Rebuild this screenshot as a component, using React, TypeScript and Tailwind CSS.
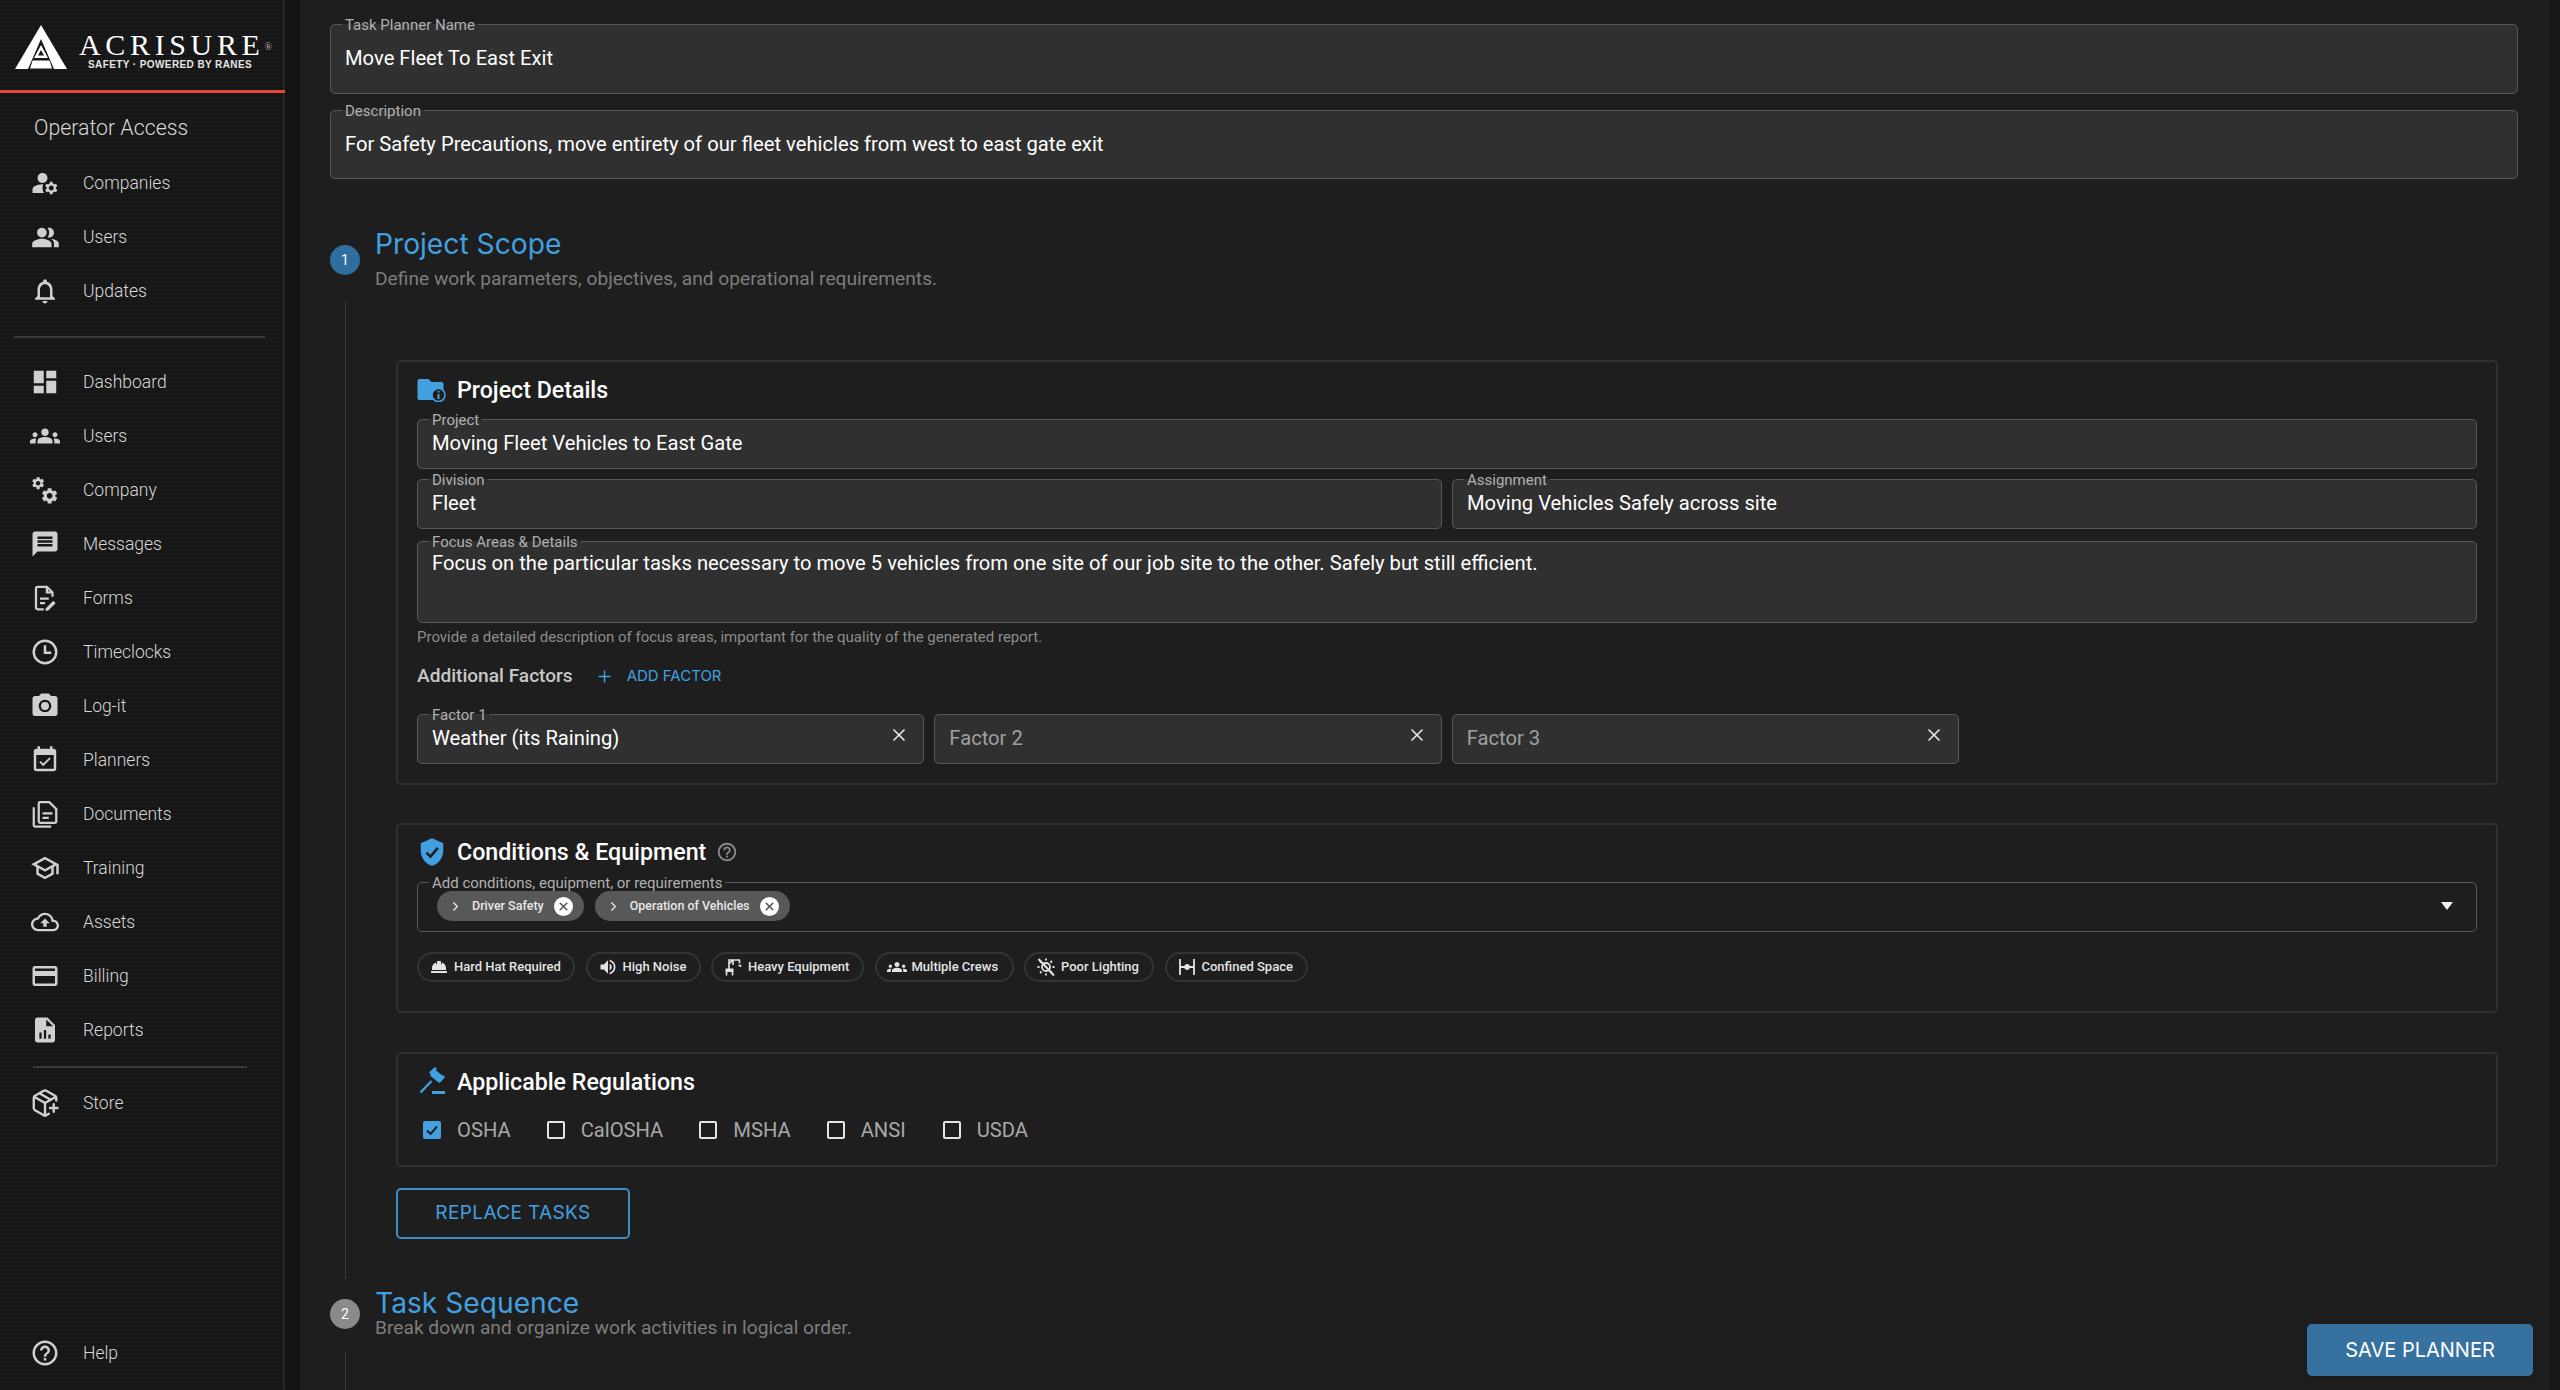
import { ChevronRight, PackagePlus, Plus, X } from "lucide-react";
import { FaHardHat } from "react-icons/fa";
import type { ReactNode } from "react";

const gear =
  "M19.14 12.94c.04-.3.06-.61.06-.94 0-.32-.02-.64-.07-.94l2.03-1.58c.18-.14.23-.41.12-.61l-1.92-3.32c-.12-.22-.37-.29-.59-.22l-2.39.96c-.5-.38-1.03-.7-1.62-.94l-.36-2.54c-.04-.24-.24-.41-.48-.41h-3.84c-.24 0-.43.17-.47.41l-.36 2.54c-.59.24-1.13.57-1.62.94l-2.39-.96c-.22-.08-.47 0-.59.22L2.74 8.87c-.12.21-.08.47.12.61l2.03 1.58c-.05.3-.09.63-.09.94s.02.64.07.94l-2.03 1.58c-.18.14-.23.41-.12.61l1.92 3.32c.12.22.37.29.59.22l2.39-.96c.5.38 1.03.7 1.62.94l.36 2.54c.05.24.24.41.48.41h3.84c.24 0 .44-.17.47-.41l.36-2.54c.59-.24 1.13-.56 1.62-.94l2.39.96c.22.08.47 0 .59-.22l1.92-3.32c.12-.22.07-.47-.12-.61l-2.01-1.58zM12 15.6c-1.98 0-3.6-1.62-3.6-3.6s1.62-3.6 3.6-3.6 3.6 1.62 3.6 3.6-1.62 3.6-3.6 3.6z";
const groups =
  "M12 12.75c1.63 0 3.07.39 4.24.9 1.08.48 1.76 1.56 1.76 2.73V18H6v-1.61c0-1.18.68-2.26 1.76-2.73 1.17-.52 2.61-.91 4.24-.91zM4 13c1.1 0 2-.9 2-2s-.9-2-2-2-2 .9-2 2 .9 2 2 2zm1.13 1.1c-.37-.06-.74-.1-1.13-.1-.99 0-1.93.21-2.78.58C.48 14.9 0 15.62 0 16.43V18h4.5v-1.61c0-.83.23-1.61.63-2.29zM20 13c1.1 0 2-.9 2-2s-.9-2-2-2-2 .9-2 2 .9 2 2 2zm4 3.43c0-.81-.48-1.53-1.22-1.85-.85-.37-1.79-.58-2.78-.58-.39 0-.76.04-1.13.1.4.68.63 1.46.63 2.29V18H24v-1.57zM12 6c1.66 0 3 1.34 3 3s-1.34 3-3 3-3-1.34-3-3 1.34-3 3-3z";
const helpOutline =
  "M11 18h2v-2h-2v2zm1-16C6.48 2 2 6.48 2 12s4.48 10 10 10 10-4.48 10-10S17.52 2 12 2zm0 18c-4.41 0-8-3.59-8-8s3.59-8 8-8 8 3.59 8 8-3.59 8-8 8zm0-14c-2.21 0-4 1.79-4 4h2c0-1.1.9-2 2-2s2 .9 2 2c0 2-3 1.75-3 5h2c0-2.25 3-2.5 3-5 0-2.21-1.79-4-4-4z";

function Mui({ children, className = "size-[30px]" }: { children: ReactNode; className?: string }) {
  return (
    <svg viewBox="0 0 24 24" fill="currentColor" className={className}>
      {children}
    </svg>
  );
}

const navIcons: Record<string, ReactNode> = {
  companies: (
    <Mui className="size-[32px]">
      <circle cx="10" cy="8" r="4" />
      <path d="M10.67 13.02c-.22-.01-.44-.02-.67-.02-2.42 0-4.68.67-6.61 1.82-.88.52-1.39 1.5-1.39 2.53V20h9.26c-.79-1.13-1.26-2.51-1.26-4 0-1.07.25-2.07.67-2.98z" />
      <path d="M20.75 16c0-.22-.03-.42-.06-.63l1.14-1.01-1-1.73-1.45.49c-.32-.27-.68-.48-1.08-.63L18 11h-2l-.3 1.49c-.4.15-.76.36-1.08.63l-1.45-.49-1 1.73 1.14 1.01c-.03.21-.06.41-.06.63s.03.42.06.63l-1.14 1.01 1 1.73 1.45-.49c.32.27.68.48 1.08.63L16 21h2l.3-1.49c.4-.15.76-.36 1.08-.63l1.45.49 1-1.73-1.14-1.01c.03-.21.06-.41.06-.63zM17 18c-1.1 0-2-.9-2-2s.9-2 2-2 2 .9 2 2-.9 2-2 2z" />
    </Mui>
  ),
  people: (
    <Mui className="size-[29px]">
      <circle cx="9" cy="8" r="4" />
      <path d="M16.67 13.13C18.04 14.06 19 15.32 19 17v3h4v-3c0-2.18-3.57-3.47-6.33-3.87zM15 12c2.21 0 4-1.79 4-4s-1.79-4-4-4c-.47 0-.91.1-1.33.24C14.5 5.27 15 6.58 15 8s-.5 2.73-1.33 3.76c.42.14.86.24 1.33.24zm-6 1c-2.67 0-8 1.34-8 4v3h16v-3c0-2.66-5.33-4-8-4z" />
    </Mui>
  ),
  bell: (
    <Mui>
      <path d="M12 22c1.1 0 2-.9 2-2h-4c0 1.1.9 2 2 2zm6-6v-5c0-3.07-1.63-5.64-4.5-6.32V4c0-.83-.67-1.5-1.5-1.5s-1.5.67-1.5 1.5v.68C7.64 5.36 6 7.92 6 11v5l-2 2v1h16v-1l-2-2zm-2 1H8v-6c0-2.48 1.51-4.5 4-4.5s4 2.02 4 4.5v6z" />
    </Mui>
  ),
  dashboard: (
    <Mui>
      <path d="M3 13h8V3H3v10zm0 8h8v-6H3v6zm10 0h8V11h-8v10zm0-18v6h8V3h-8z" />
    </Mui>
  ),
  groups: (
    <Mui className="size-[32px]">
      <path d={groups} />
    </Mui>
  ),
  gears: (
    <Mui>
      <path d={gear} transform="translate(0.5 0.5) scale(0.5)" />
      <path d={gear} transform="translate(8 9) scale(0.64)" />
    </Mui>
  ),
  message: (
    <Mui>
      <path d="M20 2H4c-1.1 0-1.99.9-1.99 2L2 22l4-4h14c1.1 0 2-.9 2-2V4c0-1.1-.9-2-2-2zm-2 12H6v-2h12v2zm0-3H6V9h12v2zm0-3H6V6h12v2z" />
    </Mui>
  ),
  forms: (
    <Mui>
      <g fill="none" stroke="currentColor" strokeWidth="1.8">
        <path d="M11 21H6a1.2 1.2 0 0 1-1.2-1.2V4.2A1.2 1.2 0 0 1 6 3h7.5L18 7.5V11" />
        <path d="M13.5 3v4.5H18" />
        <path d="M8 12.5h7M8 16h4" />
      </g>
      <path d="M12.5 20.3v1.9h1.9l6.1-6.1-1.9-1.9z" />
    </Mui>
  ),
  clock: (
    <Mui>
      <g fill="none" stroke="currentColor" strokeWidth="2">
        <circle cx="12" cy="12" r="9" />
        <path d="M12 6.5V12.5h5" />
      </g>
    </Mui>
  ),
  camera: (
    <Mui>
      <circle cx="12" cy="12" r="3.2" />
      <path d="M9 2 7.17 4H4c-1.1 0-2 .9-2 2v12c0 1.1.9 2 2 2h16c1.1 0 2-.9 2-2V6c0-1.1-.9-2-2-2h-3.17L15 2H9zm3 15c-2.76 0-5-2.24-5-5s2.24-5 5-5 5 2.24 5 5-2.24 5-5 5z" />
    </Mui>
  ),
  event: (
    <Mui>
      <path d="M16.53 11.06 15.47 10l-4.88 4.88-2.12-2.12-1.06 1.06L10.59 17l5.94-5.94zM19 3h-1V1h-2v2H8V1H6v2H5c-1.11 0-1.99.9-1.99 2L3 19c0 1.1.89 2 2 2h14c1.1 0 2-.9 2-2V5c0-1.1-.9-2-2-2zm0 16H5V8h14v11z" />
    </Mui>
  ),
  documents: (
    <Mui>
      <g fill="none" stroke="currentColor" strokeWidth="1.8">
        <path d="M3 6.5V21a1 1 0 0 0 1 1h13" />
        <path d="M8 2.5h7.5L21 8v10a1 1 0 0 1-1 1H8a1 1 0 0 1-1-1V3.5a1 1 0 0 1 1-1z" />
        <path d="M10 11.5h8M10 15h5" />
      </g>
    </Mui>
  ),
  school: (
    <Mui className="size-[32px]">
      <path d="M12 3 1 9l4 2.18v6L12 21l7-3.82v-6l2-1.09V17h2V9L12 3zm6.82 6L12 12.72 5.18 9 12 5.28 18.82 9zM17 15.99l-5 2.73-5-2.73v-3.72L12 15l5-2.73v3.72z" />
    </Mui>
  ),
  cloud: (
    <Mui className="size-[28px]">
      <path d="M19.35 10.04C18.67 6.59 15.64 4 12 4 9.11 4 6.6 5.64 5.35 8.04 2.34 8.36 0 10.91 0 14c0 3.31 2.69 6 6 6h13c2.76 0 5-2.24 5-5 0-2.64-2.05-4.78-4.65-4.96zM19 18H6c-2.21 0-4-1.79-4-4 0-2.05 1.53-3.76 3.56-3.97l1.07-.11.5-.95C8.08 7.14 9.94 6 12 6c2.62 0 4.88 1.86 5.39 4.43l.3 1.5 1.53.11c1.56.1 2.78 1.41 2.78 2.96 0 1.65-1.35 3-3 3zM8 13h2.55v3h2.9v-3H16l-4-4z" />
    </Mui>
  ),
  card: (
    <Mui>
      <path d="M20 4H4c-1.11 0-1.99.89-1.99 2L2 18c0 1.11.89 2 2 2h16c1.11 0 2-.89 2-2V6c0-1.11-.89-2-2-2zm0 14H4v-6h16v6zm0-10H4V6h16v2z" />
    </Mui>
  ),
  reports: (
    <Mui>
      <path
        fillRule="evenodd"
        d="M14 2H6c-1.1 0-2 .9-2 2v16c0 1.1.9 2 2 2h12c1.1 0 2-.9 2-2V8l-6-6zM13 9V3.5L18.5 9H13zM7.5 19h1.8v-5H7.5zM11.1 19h1.8v-7h-1.8zM14.7 19h1.8v-3.5h-1.8z"
      />
    </Mui>
  ),
  store: <PackagePlus className="size-[30px]" strokeWidth={1.9} />,
  help: (
    <Mui>
      <path d={helpOutline} />
    </Mui>
  ),
};

function NavItem({ icon, label }: { icon: string; label: string }) {
  return (
    <div className="flex h-[54px] items-center pl-[30px]">
      <span className="flex w-[30px] justify-center text-[#d0d0d0]">{navIcons[icon]}</span>
      <span className="ml-[23px] text-[17.5px] font-light text-[#d8d8d8]">{label}</span>
    </div>
  );
}

function Logo() {
  return (
    <div className="flex h-[90px] items-start pl-[15px] pt-[25px]">
      <svg viewBox="0 0 52 44" className="h-[44px] w-[52px]" fill="#fff">
        <path d="M26 0 52 44H39L26 14 13 44H0z" />
        <path fillRule="evenodd" d="M26 20 33 33H19zM26 25 23 30.500H29z" />
        <path d="M17.500 35.500H34.500L37 43.500H15z" />
      </svg>
      <div className="ml-[12px] mt-[5px] flex flex-col">
        <div className="font-['Liberation_Serif',serif] text-[30px] leading-[30px] tracking-[0.155em] text-white">
          ACRISURE<sup className="text-[10px] tracking-normal text-[#bbb]">®</sup>
        </div>
        <div className="ml-[9px] mt-[-1px] font-['Liberation_Sans',sans-serif] text-[10px] font-bold leading-[12px] tracking-[0.04em] text-[#e4e4e4]">
          SAFETY · POWERED BY RANES
        </div>
      </div>
    </div>
  );
}

function Sidebar() {
  return (
    <aside className="flex h-full w-[285px] shrink-0 flex-col border-r-2 border-[#262626] bg-[#161616] bg-[radial-gradient(#1c1c1c_1px,transparent_1px)] bg-[length:4px_4px]">
      <Logo />
      <div className="h-[3px] w-[285px] bg-[#e8483c]" />
      <div className="ml-[34px] mt-[23px] text-[21.3px] font-light leading-[24px] text-[#d8d8d8]">Operator Access</div>
      <div className="mt-[16px]">
        <NavItem icon="companies" label="Companies" />
        <NavItem icon="people" label="Users" />
        <NavItem icon="bell" label="Updates" />
      </div>
      <div className="mx-[14px] mb-[17px] mt-[18px] h-[2px] w-[251px] bg-[#3a3a3a]" />
      <NavItem icon="dashboard" label="Dashboard" />
      <NavItem icon="groups" label="Users" />
      <NavItem icon="gears" label="Company" />
      <NavItem icon="message" label="Messages" />
      <NavItem icon="forms" label="Forms" />
      <NavItem icon="clock" label="Timeclocks" />
      <NavItem icon="camera" label="Log-it" />
      <NavItem icon="event" label="Planners" />
      <NavItem icon="documents" label="Documents" />
      <NavItem icon="school" label="Training" />
      <NavItem icon="cloud" label="Assets" />
      <NavItem icon="card" label="Billing" />
      <NavItem icon="reports" label="Reports" />
      <div className="mb-[8px] ml-[33px] mt-[9px] h-[2px] w-[214px] bg-[#3a3a3a]" />
      <NavItem icon="store" label="Store" />
      <div className="mt-auto pb-[10px]">
        <NavItem icon="help" label="Help" />
      </div>
    </aside>
  );
}

function Field({
  label,
  className,
  filled = true,
  children,
}: {
  label?: string;
  className: string;
  filled?: boolean;
  children: ReactNode;
}) {
  return (
    <fieldset
      className={`min-w-0 rounded-[5px] border-[1.5px] border-[#585858] px-[14px] ${filled ? "bg-[#303030]" : ""} ${className}`}
    >
      <legend className={`h-[18px] text-[15px] leading-[21px] text-[#b0b0b0] ${label ? "-ml-[3px] px-[3px]" : "w-0 p-0"}`}>
        {label}
      </legend>
      {children}
    </fieldset>
  );
}

function Value({ className, children }: { className: string; children: ReactNode }) {
  return <div className={`text-[20.2px] leading-[24px] text-white ${className}`}>{children}</div>;
}

function Section({ icon, title, children }: { icon: ReactNode; title: string; children?: ReactNode }) {
  return (
    <div className="flex h-[30px] items-center">
      <span className="flex w-[40px] justify-start text-[#42a0e0]">{icon}</span>
      <span className="text-[23.2px] font-medium text-white">{title}</span>
      {children}
    </div>
  );
}

function Step({ n, active, title, sub, subClass }: { n: number; active: boolean; title: string; sub: string; subClass: string }) {
  return (
    <div className="flex items-center">
      <div
        className={`mt-[2px] flex size-[30px] shrink-0 items-center justify-center rounded-full text-[14px] text-white ${active ? "bg-[#2f6f9f]" : "bg-[#8a8a8a]"}`}
      >
        {n}
      </div>
      <div className="ml-[15px]">
        <div className="font-['Inter',sans-serif] text-[28.2px] leading-[34px] text-[#42a0e0]">{title}</div>
        <div className={`text-[19.2px] leading-[24px] text-[#7d7d7d] ${subClass}`}>{sub}</div>
      </div>
    </div>
  );
}

function Factor({ label, value, placeholder }: { label?: string; value?: string; placeholder?: string }) {
  return (
    <Field label={label} className="relative h-[59px] flex-1">
      <div className={`mt-[3px] text-[20.2px] leading-[24px] ${value ? "text-white" : "text-[#a0a0a0]"}`}>
        {value ?? placeholder}
      </div>
      <X className="absolute right-[14px] top-[2px] size-[20px] text-[#e8e8e8]" strokeWidth={2} />
    </Field>
  );
}

function Chip({ label }: { label: string }) {
  return (
    <div className="flex h-[30px] items-center rounded-full bg-[#585858] pl-[11px] pr-[11px]">
      <ChevronRight className="size-[15px] text-[#f0f0f0]" strokeWidth={1.8} />
      <span className="ml-[9px] text-[12.5px] font-medium text-[#e8e8e8]">{label}</span>
      <span className="ml-[10px] flex size-[19px] items-center justify-center rounded-full bg-white">
        <X className="size-[13px] text-[#585858]" strokeWidth={3} />
      </span>
    </div>
  );
}

function QuickChip({ icon, label, width }: { icon: ReactNode; label: string; width: string }) {
  return (
    <div className={`flex h-[30px] items-center rounded-full border-2 border-[#343434] pl-[10px] ${width}`}>
      <span className="flex w-[20px] justify-center text-[#e4e4e4]">{icon}</span>
      <span className="ml-[5px] text-[13px] font-medium text-[#e4e4e4]">{label}</span>
    </div>
  );
}

function Check({ label, checked, className = "" }: { label: string; checked?: boolean; className?: string }) {
  return (
    <div className={`flex h-[24px] items-center ${className}`}>
      {checked ? (
        <span className="flex size-[18px] items-center justify-center rounded-[2px] bg-[#42a0e0]">
          <svg viewBox="0 0 18 18" className="size-[18px]" fill="none" stroke="#1e1e1e" strokeWidth="2">
            <path d="M4 9.500l3.500 3.500 6.500-7.500" />
          </svg>
        </span>
      ) : (
        <span className="size-[18px] rounded-[2px] border-2 border-[#e4e4e4]" />
      )}
      <span className="ml-[16px] text-[20.2px] text-[#a8a8a8]">{label}</span>
    </div>
  );
}

function Card({ className, children }: { className: string; children: ReactNode }) {
  return <section className={`rounded-[5px] border-2 border-[#303030] px-[19px] ${className}`}>{children}</section>;
}

export default function App() {
  return (
    <div className="relative flex h-[1390px] overflow-hidden bg-[#131313] font-['Roboto',sans-serif]">
      <Sidebar />
      <div className="w-[15px] shrink-0" />
      <main className="w-[2249px] shrink-0 bg-[#1e1e1e] pl-[30px] pr-[31px] pt-[15px]">
        <Field label="Task Planner Name" className="h-[79px]">
          <Value className="mt-[13px]">Move Fleet To East Exit</Value>
        </Field>
        <Field label="Description" className="mt-[7px] h-[78px]">
          <Value className="mt-[13px]">For Safety Precautions, move entirety of our fleet vehicles from west to east gate exit</Value>
        </Field>

        <div className="mt-[48px]">
          <Step
            n={1}
            active
            title="Project Scope"
            sub="Define work parameters, objectives, and operational requirements."
            subClass="mt-[6px]"
          />
        </div>

        <div className="ml-[15px] mr-[20px] mt-[11px] border-l border-[#3a3a3a] pb-[40px] pl-[50px] pt-[58px]">
          <Card className="pb-[19px] pt-[13px]">
            <Section
              title="Project Details"
              icon={
                <svg viewBox="0 0 28 24" className="h-[24px] w-[29px]">
                  <path d="M2 1h9l3 3h10a2 2 0 0 1 2 2v14a2 2 0 0 1-2 2H2a2 2 0 0 1-2-2V3a2 2 0 0 1 2-2z" fill="#42a0e0" />
                  <circle cx="21" cy="17" r="6.500" fill="#1e1e1e" stroke="#42a0e0" strokeWidth="1.500" />
                  <path d="M21 16v5M21 13v1.500" stroke="#42a0e0" strokeWidth="2" />
                </svg>
              }
            />
            <Field label="Project" className="mt-[5px] h-[59px]">
              <Value className="mt-[3px]">Moving Fleet Vehicles to East Gate</Value>
            </Field>
            <div className="mt-[1px] flex gap-[10px]">
              <Field label="Division" className="h-[59px] flex-1">
                <Value className="mt-[3px]">Fleet</Value>
              </Field>
              <Field label="Assignment" className="h-[59px] flex-1">
                <Value className="mt-[3px]">Moving Vehicles Safely across site</Value>
              </Field>
            </div>
            <Field label="Focus Areas & Details" className="mt-[3px] h-[91px]">
              <Value className="mt-[1px]">
                Focus on the particular tasks necessary to move 5 vehicles from one site of our job site to the other. Safely but still efficient.
              </Value>
            </Field>
            <div className="mt-[5px] text-[15px] leading-[18px] text-[#8c8c8c]">
              Provide a detailed description of focus areas, important for the quality of the generated report.
            </div>
            <div className="mt-[18px] flex h-[24px] items-center">
              <span className="text-[19.1px] font-medium text-[#c8c8c8]">Additional Factors</span>
              <Plus className="ml-[22px] size-[19px] text-[#42a0e0]" strokeWidth={1.8} />
              <span className="ml-[13px] font-['Inter',sans-serif] text-[15px] text-[#42a0e0]">ADD FACTOR</span>
            </div>
            <div className="mt-[17px] flex w-[1542px] gap-[10px]">
              <Factor label="Factor 1" value="Weather (its Raining)" />
              <Factor placeholder="Factor 2" />
              <Factor placeholder="Factor 3" />
            </div>
          </Card>

          <Card className="mt-[38px] pb-[29px] pt-[12px]">
            <Section
              title="Conditions & Equipment"
              icon={
                <svg viewBox="0 0 24 24" className="size-[30px]">
                  <path d="M12 1 3 5v6c0 5.550 3.840 10.740 9 12 5.160-1.260 9-6.450 9-12V5l-9-4z" fill="#42a0e0" />
                  <path d="M7.500 12.500l3.200 3.200 6-7" fill="none" stroke="#1e1e1e" strokeWidth="2" />
                </svg>
              }
            >
              <Mui className="ml-[10px] size-[22px] text-[#8a8a8a]">
                <path d={helpOutline} />
              </Mui>
            </Section>
            <Field label="Add conditions, equipment, or requirements" filled={false} className="relative mt-[6px] h-[59px]">
              <div className="flex gap-[11px] pl-[5px]">
                <Chip label="Driver Safety" />
                <Chip label="Operation of Vehicles" />
              </div>
              <svg viewBox="0 0 12 8" className="absolute right-[23px] top-[11px] h-[8px] w-[12px]" fill="#f0f0f0">
                <path d="M0 0h12L6 8z" />
              </svg>
            </Field>
            <div className="mt-[20px] flex gap-[10.5px]">
              <QuickChip label="Hard Hat Required" width="w-[158px]" icon={<FaHardHat className="size-[16px]" />} />
              <QuickChip
                label="High Noise"
                width="w-[115px]"
                icon={
                  <Mui className="size-[20px]">
                    <path d="M3 9v6h4l5 5V4L7 9H3zm13.500 3c0-1.770-1.020-3.290-2.500-4.030v8.050c1.480-.73 2.500-2.250 2.500-4.020zM14 3.230v2.060c2.890.86 5 3.540 5 6.710s-2.110 5.850-5 6.710v2.060c4.010-.91 7-4.490 7-8.770s-2.990-7.860-7-8.770z" />
                  </Mui>
                }
              />
              <QuickChip
                label="Heavy Equipment"
                width="w-[153px]"
                icon={
                  <svg viewBox="0 0 20 20" className="size-[20px]" fill="none" stroke="currentColor" strokeWidth="1.6">
                    <path d="M6 15V3h11M6 7l4-4M10 3v5M16.500 3v3.500" />
                    <path d="M2.500 11.500h8v3.500h-8z" fill="currentColor" stroke="none" />
                    <path d="M3.500 15v3.500M9.500 15v3.500M15.500 8.500h2v1.500" />
                  </svg>
                }
              />
              <QuickChip
                label="Multiple Crews"
                width="w-[139px]"
                icon={
                  <Mui className="size-[20px]">
                    <path d={groups} />
                  </Mui>
                }
              />
              <QuickChip
                label="Poor Lighting"
                width="w-[130px]"
                icon={
                  <svg viewBox="0 0 20 20" className="size-[20px]" fill="none" stroke="currentColor" strokeWidth="1.800">
                    <circle cx="10" cy="10" r="4" />
                    <path d="M10 1.500v2M10 16.500v2M1.500 10h2M16.500 10h2M4 4l1.500 1.500M14.500 14.500 16 16M4 16l1.500-1.500M14.500 5.500 16 4" />
                    <path d="M2.500 2 18 18.500" strokeWidth="2" />
                  </svg>
                }
              />
              <QuickChip
                label="Confined Space"
                width="w-[143px]"
                icon={
                  <svg viewBox="0 0 20 20" className="size-[20px]" fill="none" stroke="currentColor" strokeWidth="1.800">
                    <path d="M3 2v16M17 2v16M3 10h14" />
                    <circle cx="10" cy="10" r="2" fill="currentColor" />
                  </svg>
                }
              />
            </div>
          </Card>

          <Card className="mt-[39px] pb-[23px] pt-[13px]">
            <Section
              title="Applicable Regulations"
              icon={
                <svg viewBox="0 0 30 30" className="size-[30px]" fill="none" stroke="#42a0e0">
                  <path d="M15.500 5.500 24 12.500" strokeWidth="8" />
                  <path d="M13 6.500 19 1M21.500 15 27 9" strokeWidth="3" />
                  <path d="M14.500 14 3.500 25.500" strokeWidth="2.400" />
                  <path d="M15 25.500h13" strokeWidth="3" />
                </svg>
              }
            />
            <div className="mt-[21px] flex pl-[6px]">
              <Check label="OSHA" checked />
              <Check label="CalOSHA" className="ml-[36px]" />
              <Check label="MSHA" className="ml-[36px]" />
              <Check label="ANSI" className="ml-[36px]" />
              <Check label="USDA" className="ml-[37px]" />
            </div>
          </Card>

          <button className="mt-[21px] h-[51px] w-[234px] rounded-[5px] border-2 border-[#3d8ec8] font-['Inter',sans-serif] text-[19px] tracking-[0.02em] text-[#42a0e0]">
            REPLACE TASKS
          </button>
        </div>

        <div className="mt-[7px]">
          <Step
            n={2}
            active={false}
            title="Task Sequence"
            sub="Break down and organize work activities in logical order."
            subClass="-mt-[4px]"
          />
        </div>
        <div className="ml-[15px] mt-[11px] h-[40px] border-l border-[#3a3a3a]" />
      </main>
      <button className="absolute left-[2307px] top-[1324px] h-[52px] w-[226px] rounded-[5px] bg-[#36719f] font-['Inter',sans-serif] text-[20px] text-white shadow-md">
        SAVE PLANNER
      </button>
      <div className="flex-1 bg-[#181818]" />
    </div>
  );
}
